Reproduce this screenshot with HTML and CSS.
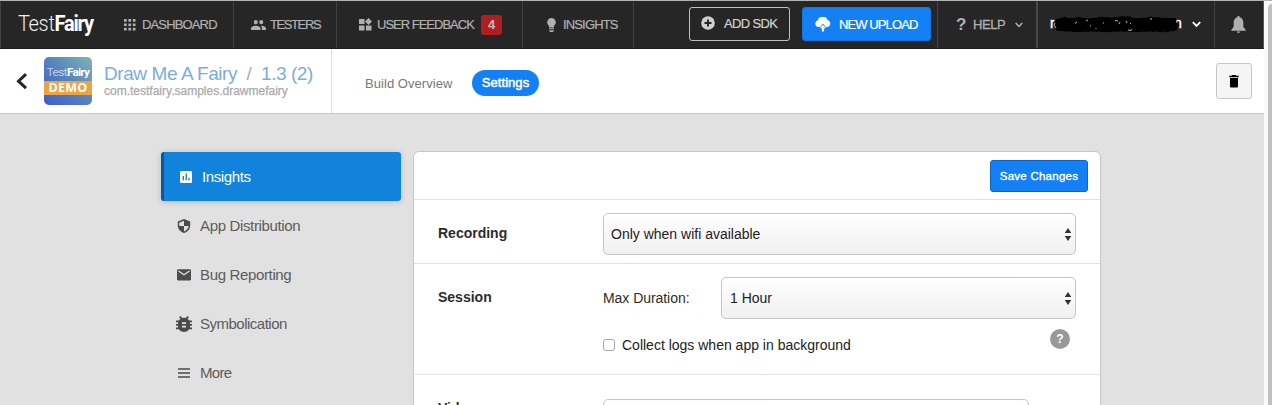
FILE: index.html
```html
<!DOCTYPE html>
<html lang="en">
<head>
<meta charset="utf-8">
<title>TestFairy - Settings</title>
<link rel="stylesheet" href="styles.css">
</head>
<body>
<div class="window">
<div class="page">
  <header class="topbar">
    <a class="logo"><span class="wordmark"><span class="logo-thin">Test</span><span class="logo-bold">Fairy</span></span></a>
    <a class="nav dashboard"><svg class="icon" width="12" height="12" viewBox="0 0 12 12"><path d="M0 0h2.700v2.700H0zM4.400 0h2.700v2.700H4.400zM8.800 0h2.700v2.700H8.800zM0 4.400h2.700v2.700H0zM4.400 4.400h2.700v2.700H4.400zM8.800 4.400h2.700v2.700H8.800zM0 8.800h2.700v2.700H0zM4.400 8.800h2.700v2.700H4.400zM8.800 8.800h2.700v2.700H8.800z"/></svg><span>DASHBOARD</span></a>
    <a class="nav testers"><svg class="icon" width="15" height="10" viewBox="1 5 22 14" preserveAspectRatio="none"><path d="M16 11a3 3 0 1 0 0-6 3 3 0 0 0 0 6zM8 11a3 3 0 1 0 0-6 3 3 0 0 0 0 6zm0 2c-2.300 0-7 1.200-7 3.500V19h14v-2.500C15 14.200 10.300 13 8 13zm8 0-1 .05c1.200.85 2 2 2 3.450V19h6v-2.500C23 14.200 18.300 13 16 13z"/></svg><span>TESTERS</span></a>
    <a class="nav feedback"><svg class="icon" width="13" height="13" viewBox="0 0 13 13"><path d="M0 1h5.500v5H0zM0 7.500h5.500v5H0zM7 7.500h5.500v5H7zM9.500 0 13 3.500 9.500 7 6 3.500z"/></svg><span>USER FEEDBACK</span><b class="count">4</b></a>
    <a class="nav insights"><svg class="icon" width="9" height="14" viewBox="0 0 9 14"><path d="M4.500 0A4.300 4.300 0 0 0 .2 4.300C.2 6 1.200 7 2 8v1.500h5V8c.8-1 1.800-2 1.800-3.700A4.300 4.300 0 0 0 4.500 0zM2 10.300h5v1H2zM2.200 12.300h4.600v1L5.500 14h-2l-1.300-.7z"/></svg><span>INSIGHTS</span></a>
    <div class="actions">
      <a class="btn sdk"><svg width="14" height="14" viewBox="0 0 14 14"><circle cx="7" cy="7" r="6.800" fill="#d0d0d0"/><path d="M7 3.500v7M3.500 7h7" stroke="#262626" stroke-width="1.900"/></svg><span>ADD SDK</span></a>
      <a class="btn upload"><svg width="16" height="15" viewBox="0 0 16 15"><path fill="#fff" d="M3.500 10A3.500 3.500 0 0 1 2.700 3.200 5.200 5.200 0 0 1 12.600 3 3.600 3.600 0 0 1 12.500 10H10.700L8 6.500 5.300 10zM8 7.700l3 3.600H9.100V14.500H6.900V11.300H5z"/></svg><span>NEW UPLOAD</span></a>
    </div>
    <a class="nav help"><span class="q">?</span><span class="help-label">HELP</span><svg width="8" height="6" viewBox="0 0 8 6"><path d="M.7 1 4 4.500 7.300 1" fill="none" stroke="#b0b0b0" stroke-width="1.500"/></svg></a>
    <a class="nav account"><svg width="134" height="20" viewBox="0 0 134 20"><text x="0" y="13" class="mail">r</text><text x="124" y="13" class="mail">n</text><path d="M8 6.500 14 4l6 3 7-3 12 2 13-2 11 1 12-2 12 3 14-2 12 1 5 1M6 10h22l18 1 21-2 22 2 20-1 17 1M8 13.500l9 .5 12 1 13-1 14 1 15-1 14 1 15-1 14 1 9-1" fill="none" stroke="#000" stroke-width="4.800" stroke-linejoin="round" stroke-linecap="round" stroke-dasharray="3 4.200"/><path d="M7 6.500 20 5.500 45 6l30-.5L105 6l19-.5M7 10h119M9 13.500l20 .5 30-.5 35 .5 31-1" fill="none" stroke="#000" stroke-width="5" stroke-linecap="round"/><path d="m5 8-1 2 2 3M27 7l-2 1.500M38 5l-2 1M46 13v1M65 5.500l3 .5M70 7l-1 2M76 6l1 2M81 8l-1 1M78 15l3 .5 1-1.500M40 11h1M53 8h1M100 4h2" fill="none" stroke="#ccc" stroke-width=".9"/></svg><svg width="9" height="7" viewBox="0 0 9 7"><path d="M.8 1.200 4.500 5 8.200 1.200" fill="none" stroke="#fff" stroke-width="1.800"/></svg></a>
    <a class="nav bell"><svg width="15" height="17" viewBox="0 0 15 17"><path d="M7.500 0c-.8 0-1.200.6-1.200 1.300C3.800 2 2.700 4 2.700 6.500v4.300L.3 14v.8h14.400V14l-2.400-3.200V6.500C12.300 4 11.200 2 8.700 1.300 8.700.6 8.300 0 7.500 0zM5.800 15.500a1.700 1.500 0 0 0 3.400 0z"/></svg></a>
  </header>

  <div class="subbar">
    <div class="app">
      <svg class="back" width="12" height="17" viewBox="0 0 12 17"><path d="M10 1.200 2.500 8.200 10 15.200" fill="none" stroke="#262626" stroke-width="3"/></svg>
      <svg class="appicon" width="48" height="48" viewBox="0 0 48 48">
        <defs><linearGradient id="sky" x1="0" y1="1" x2="1" y2="0"><stop offset="0" stop-color="#3d5dcc"/><stop offset=".5" stop-color="#5681bf"/><stop offset="1" stop-color="#7fb5b3"/></linearGradient></defs>
        <rect width="48" height="48" rx="5" fill="url(#sky)"/><rect y="24" width="48" height="14" fill="#eba445"/>
        <text x="2.700" y="19" class="mini-thin">Test<tspan class="mini-bold">Fairy</tspan></text>
        <text x="4.500" y="35.300" class="demo">DEMO</text>
      </svg>
      <div class="appname"><div class="title"><span class="name">Draw Me A Fairy</span><i>/</i><span class="ver">1.3 (2)</span></div><div class="package">com.testfairy.samples.drawmefairy</div></div>
    </div>
    <a class="tab">Build Overview</a>
    <a class="tab current"><span>Settings</span></a>
    <a class="trash"><svg width="10" height="13" viewBox="0 0 10 13"><path d="M3.300 0h3.400l.7.800H9.700v1.500H.3V.8h2.300zM1 3h8v8.500q0 1-1 1H2q-1 0-1-1z"/></svg></a>
  </div>

  <main class="content">
    <nav class="side">
      <a class="item active"><svg width="12" height="12" viewBox="0 0 12 12"><rect width="12" height="12" rx="1.300" fill="#fff"/><path d="M3.300 5v4.300M6.200 2.600v6.700M9 7v2.300" stroke="#1183dc" stroke-width="1.400"/></svg><span class="t1">Insights</span></a>
      <a class="item"><svg width="14" height="14" viewBox="0 0 14 14"><path d="M7 0 .8 2.600v4C.8 10 3.500 13.200 7 14c3.500-.8 6.200-4 6.200-7.400v-4z"/><path d="M7 1.800V7h4.700c-.3 2.500-2.200 4.600-4.700 5.400V7H2.200V3.700z" fill="#e1e1e1"/></svg><span class="t2">App Distribution</span></a>
      <a class="item"><svg width="14" height="12" viewBox="0 0 14 12"><rect y=".3" width="14" height="11.300" rx="1.400"/><path d="m1.500 2 5.500 3.700L12.500 2" fill="none" stroke="#e1e1e1" stroke-width="1.300"/></svg><span class="t3">Bug Reporting</span></a>
      <a class="item"><svg width="16" height="16" viewBox="4 3 16 18" preserveAspectRatio="none"><path d="M20 8h-2.800c-.45-.8-1.070-1.450-1.820-1.960L17 4.400 15.600 3l-2.200 2.170a6 6 0 0 0-2.800 0L8.400 3 7 4.400l1.600 1.640C7.900 6.550 7.300 7.200 6.800 8H4v2h2.100c-.05.3-.1.660-.1 1v1H4v2h2v1c0 .34.050.67.100 1H4v2h2.800a6 6 0 0 0 10.400 0H20v-2h-2.100c.050-.33.100-.66.100-1v-1h2v-2h-2v-1c0-.34-.050-.7-.1-1H20zm-6 8h-4v-2h4zm0-4h-4v-2h4z"/></svg><span class="t4">Symbolication</span></a>
      <a class="item"><svg width="12" height="10" viewBox="0 0 12 10"><path d="M0 1h12M0 5h12M0 9h12" stroke="#4b4b4b" stroke-width="1.500"/></svg><span class="t5">More</span></a>
    </nav>

    <section class="panel">
      <div class="panel-head"><button class="save">Save Changes</button></div>
      <div class="row recording">
        <h3>Recording</h3>
        <div class="select wide"><span>Only when wifi available</span><svg width="8" height="13" viewBox="0 0 8 13"><path d="M4 0 7.300 5H.7zM4 13 .7 8h6.600z"/></svg></div>
      </div>
      <div class="row session">
        <h3>Session</h3>
        <div class="fields">
          <div class="duration"><label class="max">Max Duration:</label><div class="select hour"><span>1 Hour</span><svg width="8" height="13" viewBox="0 0 8 13"><path d="M4 0 7.300 5H.7zM4 13 .7 8h6.600z"/></svg></div></div>
          <div class="logs"><i class="check"></i><span class="collect">Collect logs when app in background</span><b class="hint">?</b></div>
        </div>
      </div>
      <div class="row video"><h3>Video</h3><div class="select short"></div></div>
    </section>
  </main>
</div>
<div class="scroll"><div class="thumb"></div></div>
</div>
</body>
</html>
```
FILE: styles.css
```css
* { box-sizing: border-box; }
body { margin: 0; font-family: "Liberation Sans", Arial, sans-serif; background: #e1e1e1; overflow: hidden; }
.window { display: flex; width: 1272px; height: 405px; overflow: hidden; border-top: 1px solid #b1b4b1; }
.page { width: 1264px; height: 404px; overflow: hidden; }
.scroll { width: 8px; background: #fafafa; padding: 3px 0 0 4px; }
.thumb { height: 420px; background: #c1c1c1; border-radius: 4px 0 0 4px; }
svg { display: block; flex: none; }
span, label, h3, a, div { white-space: nowrap; }

.topbar { display: flex; height: 48px; background: #262626; border-left: 1px solid #414141; border-right: 1px solid #555; border-bottom: 1px solid #1b1b1b; color: #b0b0b0; fill: #b0b0b0; font-size: 13px; }
.logo { width: 106px; padding: 9px 0 0 17px; font: 22px/27px Roboto, sans-serif; }
.wordmark { display: inline-block; transform: scaleX(.91); transform-origin: left; }
.logo-thin { font-weight: 300; color: #eee; letter-spacing: -.4px; }
.logo-bold { font-weight: 700; color: #fff; letter-spacing: -1.300px; }
.nav { display: flex; align-items: center; border-right: 1px solid #404040; }
.dashboard { width: 127px; padding-left: 17px; gap: 6px; letter-spacing: -.85px; }
.testers { width: 103px; padding-left: 17px; gap: 4px; letter-spacing: -1.400px; }
.feedback { width: 186px; padding-left: 22px; gap: 5px; letter-spacing: -1px; }
.feedback span { width: 98px; }
.count { width: 21px; height: 20px; margin-left: 1px; border-radius: 3px; background: #b01e23; color: #c9bcbc; font-size: 13px; line-height: 20px; text-align: center; letter-spacing: 0; }
.insights { width: 111px; padding-left: 24px; gap: 7px; letter-spacing: -.85px; }
.dashboard span, .testers span, .feedback span, .insights span { -webkit-text-stroke: .2px #b0b0b0; }
.actions { display: flex; width: 303px; padding: 6px 0 0 55px; gap: 12px; }
.btn { display: flex; align-items: center; height: 34px; border-radius: 3px; }
.sdk { width: 101px; border: 1px solid #c0c0c0; padding: 0 0 2px 11px; gap: 9px; color: #d0d0d0; letter-spacing: -.65px; -webkit-text-stroke: .2px #d0d0d0; }
.upload { width: 129px; background: #1380f6; border: 1px solid #1174e3; padding-left: 12px; gap: 8px; color: #fff; letter-spacing: -.9px; -webkit-text-stroke: .2px #fff; }
.help { width: 101px; padding-left: 18px; border-left: 1px solid #444; border-right: 2px solid #484848; }
.q { font-weight: bold; font-size: 17px; width: 17px; }
.help-label { font-size: 13px; -webkit-text-stroke: .3px #b0b0b0; width: 42px; letter-spacing: -.4px; }
.account { width: 177px; padding-left: 12px; gap: 8px; }
.mail { font-size: 14px; fill: #fff; stroke: #fff; stroke-width: .4px; }
.bell { width: 48px; padding-left: 16px; border-right: 0; }

.subbar { display: flex; height: 65px; background: #fff; border-bottom: 1px solid #c9cbc9; }
.app { display: flex; width: 332px; border-right: 1px solid #ddd; padding: 8px 0 0 16px; }
.back { margin: 16px 16px 0 0; }
.appname { margin-left: 12px; padding-top: 7px; }
.mini-thin { font: 300 11.500px Roboto, sans-serif; fill: #e8eef6; letter-spacing: -.35px; }
.mini-bold { font-weight: 700; fill: #fff; letter-spacing: -.7px; }
.demo { font: 700 12.500px "Open Sans", sans-serif; fill: #fff; letter-spacing: .2px; }
.title { font-size: 19px; line-height: 20px; color: #7badde; display: flex; }
.title i { font-style: normal; color: #aaa; width: 24px; text-align: center; }
.name { letter-spacing: -.42px; }
.ver { letter-spacing: -.45px; }
.package { font-size: 12px; line-height: 14px; color: #aaa; letter-spacing: 0; -webkit-text-stroke: .25px #aaa; }
.tab { font-size: 13px; color: #777; padding-top: 27px; line-height: 15px; margin-left: 33px; width: 88px; letter-spacing: .05px; }
.current { margin-left: 19px; padding-top: 21px; width: 67px; }
.current span { display: block; width: 67px; height: 26px; border-radius: 13px; background: #1380f6; color: #fff; text-align: center; line-height: 26px; -webkit-text-stroke: .5px #fff; }
.trash { width: 36px; height: 36px; margin: 14px 12px 0 auto; border: 1px solid #c6c6c6; border-radius: 3px; background: #f5f5f5; display: flex; align-items: center; justify-content: center; }

.content { display: flex; gap: 12px; padding: 37px 0 0 161px; }
.side { width: 240px; padding-top: 1px; color: #5c5c5c; fill: #4b4b4b; }
.item { display: grid; grid-template-columns: 14px auto; justify-items: center; justify-content: start; align-items: center; column-gap: 9px; height: 49px; padding-left: 16px; font-size: 15px; }
.active { background: #1183dc; border-left: 3px solid #0857a0; padding-left: 15px; border-radius: 3px; color: #fff; box-shadow: 0 1px 6px rgba(0,0,0,.17); }
.t1 { letter-spacing: -.4px; }
.t2, .t3 { letter-spacing: -.35px; }
.t4 { letter-spacing: -.5px; }
.t5 { letter-spacing: -.7px; }

.panel { width: 688px; height: 420px; background: #fff; border: 1px solid #c6c6c6; border-radius: 6px; color: #2c2c2c; font-size: 14px; }
.panel-head { height: 48px; border-bottom: 1px solid #e2e2e2; padding: 8px 12px 0 0; display: flex; justify-content: flex-end; }
.save { width: 98px; height: 32px; padding: 0; background: #1380f6; border: 1px solid #0d66c7; border-radius: 3px; color: #fff; font: 11.500px "Liberation Sans", sans-serif; letter-spacing: .25px; -webkit-text-stroke: .35px #fff; }
.row { display: flex; border-bottom: 1px solid #e2e2e2; padding: 13px 24px 0; }
.row h3 { width: 165px; margin: 0; font-size: 14px; line-height: 16px; padding-top: 12px; }
.recording { height: 64px; }
.session { height: 111px; }
.video { height: 80px; padding-top: 24px; }
.row.video h3 { padding-top: 1px; }
.select { display: flex; align-items: center; justify-content: space-between; height: 42px; border: 1px solid #c5c5c5; border-radius: 5px; background: linear-gradient(#fff, #f0f0f0); padding: 0 3px 0 8px; fill: #333; color: #222; }
.wide { width: 473px; padding-left: 7px; }
.short { width: 426px; }
.hour { width: 355px; }
.duration { display: flex; align-items: center; }
.max { width: 118px; letter-spacing: -.05px; }
.logs { display: flex; align-items: center; width: 473px; padding-top: 10px; }
.check { width: 12px; height: 12px; margin-top: 6px; border: 1px solid #a5a5a5; border-radius: 3px; background: #fff; }
.collect { margin: 6px 0 0 7px; color: #222; }
.hint { width: 20px; height: 20px; margin: 0 6px 6px auto; border-radius: 50%; background: #999; color: #fff; font-size: 12px; line-height: 20px; text-align: center; }
```
